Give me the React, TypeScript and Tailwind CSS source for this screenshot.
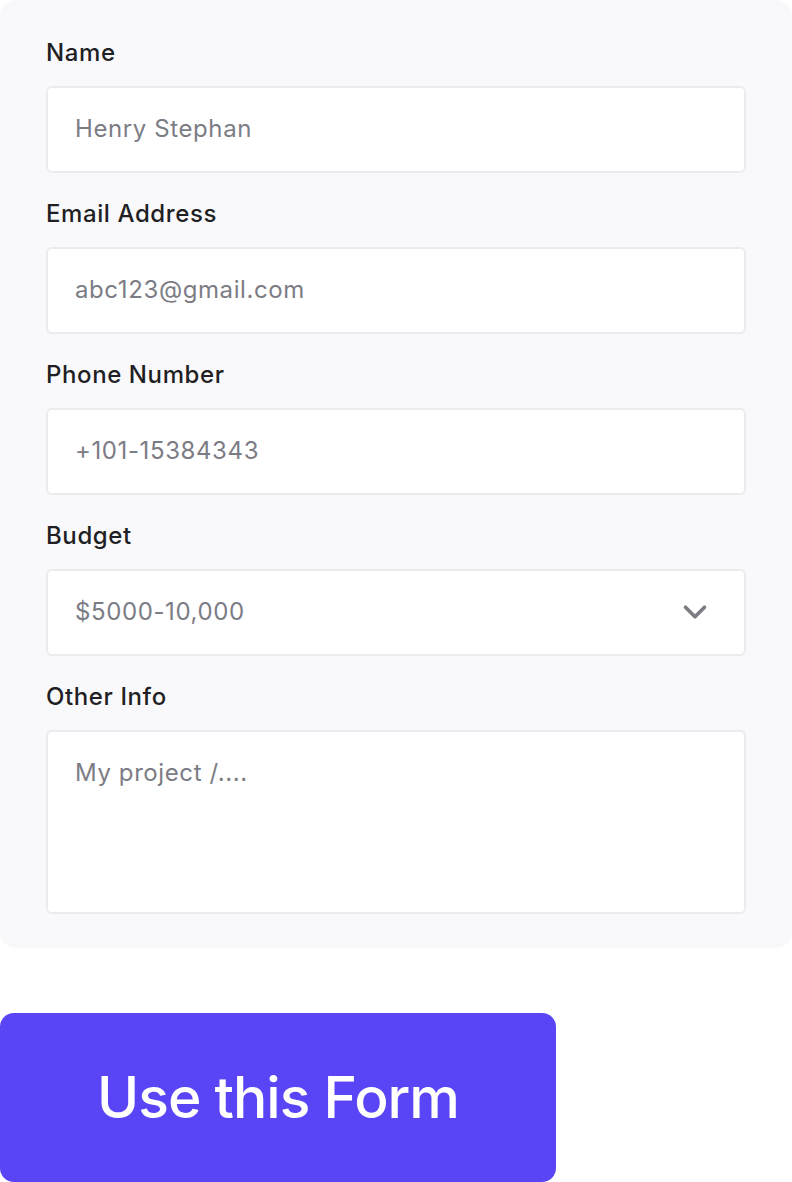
import { ChevronDown } from 'lucide-react';

interface Field {
  label: string;
  placeholder: string;
  kind: 'input' | 'select' | 'textarea';
}

const fields: Field[] = [
  { label: 'Name', placeholder: 'Henry Stephan', kind: 'input' },
  { label: 'Email Address', placeholder: 'abc123@gmail.com', kind: 'input' },
  { label: 'Phone Number', placeholder: '+101-15384343', kind: 'input' },
  { label: 'Budget', placeholder: '$5000-10,000', kind: 'select' },
  { label: 'Other Info', placeholder: 'My project /....', kind: 'textarea' },
];

const App = () => {
  return (
    <div className="min-h-screen bg-white font-['Inter','Noto_Sans',sans-serif]">
      <div className="rounded-2xl bg-[#f9f9fb] px-[46px] pt-[38px] pb-[34px]">
        {fields.map((field, i) => (
          <div key={field.label} className={i < fields.length - 1 ? 'mb-[26px]' : ''}>
            <p className="mb-[18px] text-[24px] leading-[30px] font-medium tracking-[0.6px] text-[#1f1f24]">
              {field.label}
            </p>
            {field.kind === 'textarea' ? (
              <div className="h-[184px] rounded-md border-2 border-[#ebebef] bg-white px-[27px] pt-[26px] text-[24px] leading-[30px] tracking-[0.6px] text-[#7c7c85]">
                {field.placeholder}
              </div>
            ) : (
              <div className="flex h-[87px] items-center justify-between rounded-md border-2 border-[#ebebef] bg-white pb-[2px] pl-[27px] pr-[30px] text-[24px] tracking-[0.6px] text-[#7c7c85]">
                <span>{field.placeholder}</span>
                {field.kind === 'select' && (
                  <ChevronDown size={38} strokeWidth={2.3} className="text-[#7c7c85]" />
                )}
              </div>
            )}
          </div>
        ))}
      </div>
      <button className="mt-[65px] flex h-[169px] w-[556px] items-center justify-center rounded-[14px] bg-[#5945f5] text-[57px] font-medium tracking-[-1px] text-white">
        Use this Form
      </button>
    </div>
  );
};

export default App;
